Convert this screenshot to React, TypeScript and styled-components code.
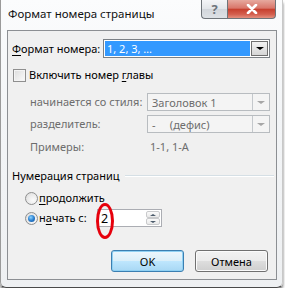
import React from "react";
import styled, { createGlobalStyle, css } from "styled-components";

const GlobalStyle = createGlobalStyle`
  html, body { margin: 0; padding: 0; background: #ffffff; }
  body { font-family: "Noto Sans", "Open Sans", Arial, sans-serif; font-size: 11px; color: #000; }
  * { box-sizing: border-box; }
`;

const Window = styled.div`
  width: 283px;
  height: 288px;
  display: flex;
  flex-direction: column;
  padding: 0 5px 7px 6px;
  background: linear-gradient(180deg, #fbfcfd 0%, #f3f5f7 40%, #eef0f2 100%);
  border-left: 1px solid #9a9a9a;
  border-bottom: 1px solid #4a4a4a;
  border-right: 1px solid #c8c8c8;
  border-radius: 0 0 6px 6px;
  box-shadow: 0 3px 3px rgba(0, 0, 0, 0.55);
`;

const TitleBar = styled.div`
  height: 30px;
  flex: none;
  display: flex;
  justify-content: space-between;
  align-items: flex-start;
`;

const TitleText = styled.div`
  padding-top: 6px;
  padding-left: 1px;
  font-size: 11.5px;
  color: #111;
`;

const CaptionButtons = styled.div`
  display: flex;
  margin-right: 1px;
`;

const CaptionButton = styled.div<{ $variant: "help" | "close" }>`
  height: 19px;
  display: flex;
  align-items: center;
  justify-content: center;
  border: 1px solid #6f7479;
  border-top: none;
  ${(p) =>
    p.$variant === "help"
      ? css`
          width: 26px;
          border-radius: 0 0 0 4px;
          border-right: none;
          background: linear-gradient(180deg, #f4f5f7 0%, #e2e5e9 50%, #d2d6db 51%, #dde1e5 100%);
          color: #6d747c;
          font-size: 13px;
          font-weight: bold;
        `
      : css`
          width: 49px;
          border-radius: 0 0 4px 0;
          background: linear-gradient(180deg, #e6a99f 0%, #d9766a 45%, #c7402f 52%, #d4604f 80%, #e4907f 100%);
          color: #fff;
        `}
`;

const Panel = styled.div`
  flex: 1;
  background: #f0f0f0;
  border: 1px solid #8c8f93;
  display: flex;
  flex-direction: column;
  padding: 0 6px 0 4px;
`;

const Row = styled.div<{ $mt: number; $indent?: number }>`
  display: flex;
  align-items: center;
  margin-top: ${(p) => p.$mt}px;
  padding-left: ${(p) => p.$indent ?? 0}px;
`;

const Label = styled.div<{ $width?: number; $disabled?: boolean }>`
  width: ${(p) => (p.$width ? `${p.$width}px` : "auto")};
  flex: none;
  color: ${(p) => (p.$disabled ? "#6d6d6d" : "#000")};
  white-space: nowrap;
  line-height: 14px;
`;

const U = styled.span`
  text-decoration: underline;
  text-underline-offset: 2px;
`;

const Combo = styled.div<{ $width: number; $disabled?: boolean }>`
  width: ${(p) => p.$width}px;
  height: ${(p) => (p.$disabled ? 18 : 19)}px;
  display: flex;
  align-items: stretch;
  border: 1px solid ${(p) => (p.$disabled ? "#b8bcc0" : "#7b8085")};
  background: ${(p) => (p.$disabled ? "#f4f4f4" : "#ffffff")};
  padding: ${(p) => (p.$disabled ? "0" : "1px")};
`;

const ComboText = styled.div<{ $selected?: boolean; $disabled?: boolean }>`
  flex: 1;
  display: flex;
  align-items: center;
  padding-left: ${(p) => (p.$selected ? 2 : 4)}px;
  background: ${(p) => (p.$selected ? "#3399ff" : "transparent")};
  color: ${(p) => (p.$selected ? "#ffffff" : p.$disabled ? "#6d6d6d" : "#000")};
  white-space: pre;
`;

const ComboArrow = styled.div<{ $disabled?: boolean }>`
  width: 17px;
  margin-left: ${(p) => (p.$disabled ? 0 : 1)}px;
  display: flex;
  align-items: center;
  justify-content: center;
  ${(p) =>
    p.$disabled
      ? css`
          border-left: 1px solid #c4c8cc;
          background: #f4f4f4;
        `
      : css`
          border: 1px solid #6f6f6f;
          background: linear-gradient(180deg, #f2f2f2 0%, #e3e3e3 50%, #d6d6d6 100%);
        `}
`;

const Triangle = styled.div<{ $color: string; $up?: boolean; $size?: number }>`
  width: 0;
  height: 0;
  border-left: ${(p) => p.$size ?? 4}px solid transparent;
  border-right: ${(p) => p.$size ?? 4}px solid transparent;
  ${(p) =>
    p.$up
      ? css`border-bottom: ${(p.$size ?? 4) - 1}px solid ${p.$color};`
      : css`border-top: ${(p.$size ?? 4) - 1}px solid ${p.$color};`}
`;

const CheckBox = styled.div`
  width: 13px;
  height: 13px;
  flex: none;
  margin-left: 1px;
  margin-right: 3px;
  border: 1px solid #8f8f8f;
  background: linear-gradient(135deg, #dcdcdc 0%, #f2f2f2 70%, #fafafa 100%);
  box-shadow: inset 0 0 0 1px #f4f4f4;
`;

const SectionHeader = styled.div<{ $mt: number }>`
  display: flex;
  align-items: center;
  margin-top: ${(p) => p.$mt}px;
  gap: 5px;
`;

const HeaderLine = styled.div`
  flex: 1;
  height: 2px;
  border-top: 1px solid #d5dfe5;
  border-bottom: 1px solid #ffffff;
  margin-right: -4px;
`;

const Radio = styled.div<{ $checked?: boolean }>`
  width: 13px;
  height: 13px;
  flex: none;
  border-radius: 50%;
  border: 1px solid #8e8f8f;
  background: radial-gradient(circle at 65% 65%, #fbfbfb 0%, #e8e8e8 60%, #d4d4d4 100%);
  margin-right: 1px;
  display: flex;
  align-items: center;
  justify-content: center;
  ${(p) =>
    p.$checked &&
    css`
      &::after {
        content: "";
        width: 7px;
        height: 7px;
        border-radius: 50%;
        background: radial-gradient(circle at 40% 35%, #8cd4ff 0%, #2b7fd0 50%, #104f96 100%);
      }
    `}
`;

const SpinBox = styled.div`
  position: relative;
  width: 65px;
  height: 18px;
  flex: none;
  display: flex;
  border: 1px solid #abadb3;
  background: #fff;
`;

const SpinValue = styled.div`
  flex: 1;
  display: flex;
  align-items: center;
  padding-left: 3px;
  font-size: 12.5px;
`;

const SpinButtons = styled.div`
  width: 15px;
  display: flex;
  flex-direction: column;
  padding: 1px 1px 1px 0;
`;

const SpinBtn = styled.div`
  flex: 1;
  display: flex;
  align-items: center;
  justify-content: center;
  background: linear-gradient(180deg, #fafafa 0%, #e9e9e9 100%);
  border: 1px solid #c9cacc;
  border-radius: 2px;
`;

const Oval = styled.div`
  position: absolute;
  left: -2px;
  top: -7px;
  width: 18px;
  height: 36px;
  border: 3.5px solid #e6000c;
  border-radius: 50%;
  pointer-events: none;
`;

const ButtonRow = styled.div`
  display: flex;
  justify-content: flex-end;
  gap: 11px;
  margin-top: 23px;
  padding-right: 2px;
`;

const DialogButton = styled.div<{ $default?: boolean }>`
  width: 73px;
  height: 22px;
  display: flex;
  align-items: center;
  justify-content: center;
  border-radius: 3px;
  ${(p) =>
    p.$default
      ? css`
          border: 1px solid #3c7fb1;
          background: linear-gradient(180deg, #edf7fd 0%, #dbeff9 48%, #bee6fd 52%, #a8d8f4 100%);
          box-shadow: inset 0 0 0 1px #90d1f3;
        `
      : css`
          border: 1px solid #707070;
          background: linear-gradient(180deg, #f2f2f2 0%, #ebebeb 48%, #dddddd 52%, #cfcfcf 100%);
          box-shadow: inset 0 0 0 1px #fbfbfb;
        `}
`;

export default function App() {
  return (
    <>
      <GlobalStyle />
      <Window>
        <TitleBar>
          <TitleText>Формат номера страницы</TitleText>
          <CaptionButtons>
            <CaptionButton $variant="help">?</CaptionButton>
            <CaptionButton $variant="close">
              <svg width="12" height="10" viewBox="0 0 12 10">
                <path d="M2 1 L10 9 M10 1 L2 9" stroke="#ffffff" strokeWidth="2.6" strokeLinecap="round" />
              </svg>
            </CaptionButton>
          </CaptionButtons>
        </TitleBar>
        <Panel>
          <Row $mt={8}>
            <Label $width={91}>
              <U>Ф</U>ормат номера:
            </Label>
            <Combo $width={168}>
              <ComboText $selected>1, 2, 3, …</ComboText>
              <ComboArrow>
                <Triangle $color="#000" />
              </ComboArrow>
            </Combo>
          </Row>
          <Row $mt={10}>
            <CheckBox />
            <Label>
              Включить номер <U>г</U>лавы
            </Label>
          </Row>
          <Row $mt={11} $indent={18}>
            <Label $width={117} $disabled>
              начинается со стиля:
            </Label>
            <Combo $width={123} $disabled>
              <ComboText $disabled>Заголовок 1</ComboText>
              <ComboArrow $disabled>
                <Triangle $color="#a6a6a6" />
              </ComboArrow>
            </Combo>
          </Row>
          <Row $mt={4} $indent={18}>
            <Label $width={117} $disabled>
              разделитель:
            </Label>
            <Combo $width={123} $disabled>
              <ComboText $disabled>{"-     (дефис)"}</ComboText>
              <ComboArrow $disabled>
                <Triangle $color="#a6a6a6" />
              </ComboArrow>
            </Combo>
          </Row>
          <Row $mt={7} $indent={18}>
            <Label $width={120} $disabled>
              Примеры:
            </Label>
            <Label $disabled>1-1, 1-A</Label>
          </Row>
          <SectionHeader $mt={15}>
            <Label>Нумерация страниц</Label>
            <HeaderLine />
          </SectionHeader>
          <Row $mt={8} $indent={13}>
            <Radio />
            <Label>
              <U>п</U>родолжить
            </Label>
          </Row>
          <Row $mt={4} $indent={13}>
            <Radio $checked />
            <Label $width={58}>
              н<U>а</U>чать с:
            </Label>
            <SpinBox>
              <SpinValue>2</SpinValue>
              <SpinButtons>
                <SpinBtn>
                  <Triangle $color="#4a5a6a" $up $size={3} />
                </SpinBtn>
                <SpinBtn>
                  <Triangle $color="#4a5a6a" $size={3} />
                </SpinBtn>
              </SpinButtons>
              <Oval />
            </SpinBox>
          </Row>
          <ButtonRow>
            <DialogButton $default>OK</DialogButton>
            <DialogButton>Отмена</DialogButton>
          </ButtonRow>
        </Panel>
      </Window>
    </>
  );
}
